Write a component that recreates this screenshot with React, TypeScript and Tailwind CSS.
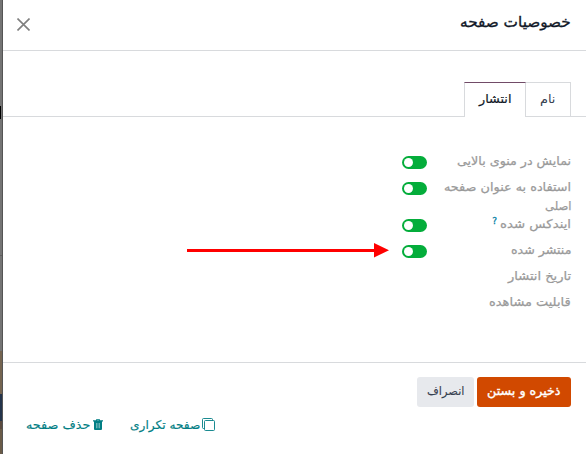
import { useLayoutEffect, useRef, useState } from "react";

// Single line of text condensed or expanded to fill its column.
function Fit({ children, className }: { children: string; className: string }) {
  const ref = useRef<HTMLSpanElement>(null);
  const [scale, setScale] = useState(1);
  useLayoutEffect(() => {
    const el = ref.current;
    if (el && el.parentElement) setScale(el.parentElement.clientWidth / el.offsetWidth);
  }, []);
  return (
    <span className={`block shrink-0 text-right whitespace-nowrap ${className}`}>
      <span ref={ref} className="inline-block origin-right" style={{ transform: `scaleX(${scale})` }}>
        {children}
      </span>
    </span>
  );
}

function Toggle() {
  return (
    <span className="mt-[4px] flex h-[13px] w-[25px] shrink-0 items-center justify-end rounded-full bg-[#04ad3b] px-[2px]">
      <span className="h-[9px] w-[9px] rounded-full bg-white" />
    </span>
  );
}

function Row({ lines, height, toggle, help }: { lines: [string, string][]; height: string; toggle?: boolean; help?: boolean }) {
  return (
    <div className={`flex ${height}`}>
      <div className="flex w-[144px] shrink-0">
        <div>
          {lines.map(([text, width]) => (
            <Fit key={text} className={width}>{text}</Fit>
          ))}
        </div>
        {help && <sup className="top-0 mr-[3px] text-[9px] leading-[13px] text-[#0180a5] [-webkit-text-stroke:0.3px_#0180a5]">?</sup>}
      </div>
      {toggle && <Toggle />}
    </div>
  );
}

export default function App() {
  return (
    <div dir="rtl" className="flex h-[454px] w-[586px] overflow-hidden bg-white font-['DejaVu_Sans',sans-serif]">
      <main className="flex w-[583px] shrink-0 flex-col">
        <header className="flex h-[51px] shrink-0 items-start justify-between border-b border-[#d8dadd] pr-[15px] pl-[14px]">
          <h1 className="pt-[11px] text-[15px] leading-[22px] text-[#111827] [-webkit-text-stroke:0.35px_#111827]">
            <Fit className="w-[111px]">خصوصیات صفحه</Fit>
          </h1>
          <svg className="mt-[18px] h-[13px] w-[13px]" viewBox="0 0 13 13" fill="none" stroke="#7f7f7f" strokeWidth="1.6">
            <path d="M0.5 0.5 12.5 12.5M12.5 0.5 0.5 12.5" />
          </svg>
        </header>

        <nav className="mt-[31px] flex h-[35px] shrink-0 text-[12px] leading-[18px]">
          <div className="w-[15px] border-b border-[#d8dadd]" />
          <div className="flex w-[45px] justify-center border border-l-0 border-[#d8dadd] pt-[7px] text-[#374151]">
            <Fit className="w-[15px]">نام</Fit>
          </div>
          <div className="flex w-[62px] justify-center border-x border-t border-x-[#d8dadd] border-t-[#714b67] pt-[7px] text-[#111827] [-webkit-text-stroke:0.2px_#111827]">
            <Fit className="w-[32px]">انتشار</Fit>
          </div>
          <div className="flex-1 border-b border-[#d8dadd]" />
        </nav>

        <section className="flex h-[245px] shrink-0 flex-col pt-[35px] pr-[15px] text-[12px] leading-[19px] text-[#9a9a9a] [-webkit-text-stroke:0.25px_#9a9a9a]">
          <Row height="h-[26px]" toggle lines={[["نمایش در منوی بالایی", "w-[114px]"]]} />
          <Row height="h-[37px]" toggle lines={[["استفاده به عنوان صفحه", "w-[127px]"], ["اصلی", "w-[27px]"]]} />
          <Row height="h-[26px]" toggle help lines={[["ایندکس شده", "w-[71px]"]]} />
          <div className="relative">
            <Row height="h-[26px]" toggle lines={[["منتشر شده", "w-[60px]"]]} />
            <svg className="absolute top-[1px] right-[182px] h-[16px] w-[202px]" viewBox="0 0 202 16" fill="red">
              <path d="M0 7H187V1L202 8.2 187 15.5V10H0Z" />
            </svg>
          </div>
          <Row height="h-[26px]" lines={[["تاریخ انتشار", "w-[63px]"]]} />
          <Row height="h-[26px]" lines={[["قابلیت مشاهده", "w-[82px]"]]} />
        </section>

        <footer className="flex flex-1 flex-col border-t border-[#d8dadd] pt-[14px] text-[12px] leading-[18px]">
          <div className="flex gap-[3px] pr-[15px]">
            <button className="flex h-[30px] w-[94px] justify-center rounded-[3px] bg-[#d14900] pt-[5px] text-white [-webkit-text-stroke:0.4px_white]">
              <Fit className="w-[74px]">ذخیره و بستن</Fit>
            </button>
            <button className="flex h-[30px] w-[57px] justify-center rounded-[3px] bg-[#e7e9ed] pt-[5px] text-[#374151] [-webkit-text-stroke:0.1px_#374151]">
              <Fit className="w-[37px]">انصراف</Fit>
            </button>
          </div>
          <div className="mt-[9px] flex justify-end gap-[27px] pl-[23px] text-[#017e84] [-webkit-text-stroke:0.15px_#017e84]">
            <a className="flex gap-[2px]">
              <svg className="mt-[2px] h-[13px] w-[13px]" viewBox="0 0 13 13" fill="none" stroke="#017e84" strokeWidth="0.9">
                <rect x="2.5" y="2.5" width="10" height="10" rx="1" />
                <path d="M2.5 10.5H1.5Q0.5 10.5 0.5 9.5V1.5Q0.5 0.5 1.5 0.5H9.5Q10.5 0.5 10.5 1.5V2.5" />
              </svg>
              <Fit className="w-[70px]">صفحه تکراری</Fit>
            </a>
            <a className="flex gap-[3px]">
              <svg className="mt-[3px] h-[11px] w-[10px]" viewBox="0 0 10 11" fill="#017e84">
                <path fillRule="evenodd" d="M3 1.2 3.5 0H6.5L7 1.2H10V2.5H9V10Q9 11 8 11H2Q1 11 1 10V2.5H0V1.2ZM4 1.2H6L5.8 .8H4.2ZM3.2 4V9.3H3.6V4ZM4.8 4V9.3H5.2V4ZM6.4 4V9.3H6.8V4Z" />
              </svg>
              <Fit className="w-[64px]">حذف صفحه</Fit>
            </a>
          </div>
        </footer>
      </main>

      <aside className="flex w-[3px] shrink-0 flex-col border-r border-[#555] bg-[#747474]">
        <div className="mt-[106px] h-[13px] w-[1px] self-end bg-black" />
        <div className="mt-[136px] h-px bg-[#5f5f5f]" />
        <div className="mt-[95px] h-[43px] bg-[#746450]" />
        <div className="h-[27px] bg-[#24344b]" />
        <div className="h-[8px] bg-[#5b4b40]" />
        <div className="flex-1 bg-[#6a5b48]" />
      </aside>
    </div>
  );
}
